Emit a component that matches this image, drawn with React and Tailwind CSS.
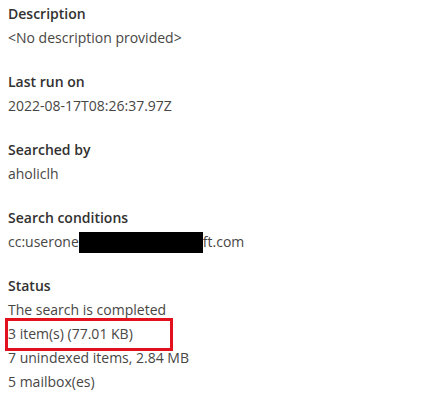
const sections = [
  { label: "Description", lines: ["<No description provided>"] },
  { label: "Last run on", lines: ["2022-08-17T08:26:37.97Z"] },
  { label: "Searched by", lines: ["aholiclh"] },
];

function Label({ children }) {
  return <div className="h-[24px] leading-[24px] font-semibold text-[#323130]">{children}</div>;
}

function Line({ children }) {
  return <div className="h-[24px] leading-[24px] text-[#484644]">{children}</div>;
}

export default function App() {
  return (
    <div
      className="relative h-[415px] w-[426px] bg-white pl-[8px] pt-[2px] text-[14px]"
      style={{ fontFamily: '"Open Sans", "Noto Sans", sans-serif' }}
    >
      <div className="flex flex-col gap-[20px]">
        {sections.map((s) => (
          <div key={s.label}>
            <Label>{s.label}</Label>
            {s.lines.map((l) => <Line key={l}>{l}</Line>)}
          </div>
        ))}
        <div>
          <Label>Search conditions</Label>
          <Line>
            <span className="flex items-center">
              cc:userone
              <span className="inline-block h-[21px] w-[124px] bg-black" />
              ft.com
            </span>
          </Line>
        </div>
        <div className="relative">
          <Label>Status</Label>
          <Line>The search is completed</Line>
          <Line>3 item(s) (77.01 KB)</Line>
          <Line>7 unindexed items, 2.84 MB</Line>
          <Line>5 mailbox(es)</Line>
          <div className="absolute left-[-3px] top-[44px] h-[33px] w-[168px] border-[3px] border-[#e3101e]" />
        </div>
      </div>
    </div>
  );
}
